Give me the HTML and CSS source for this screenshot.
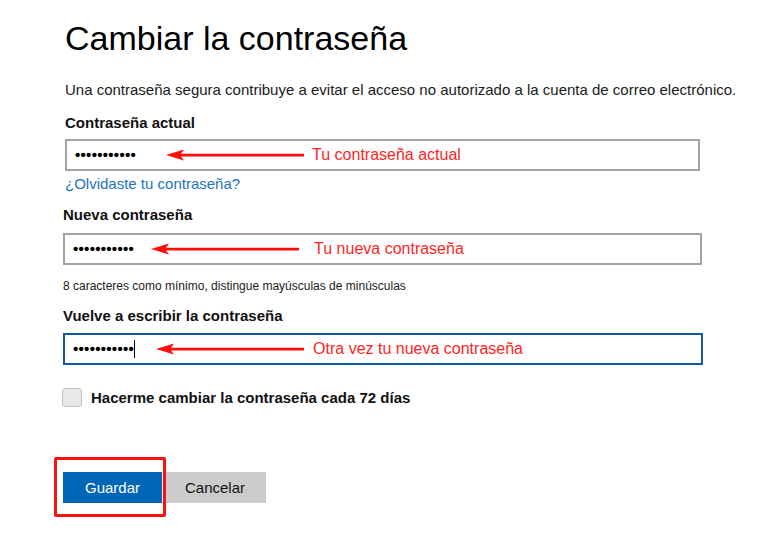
FILE: index.html
```html
<!DOCTYPE html>
<html lang="es">
<head>
<meta charset="utf-8">
<title>Cambiar la contraseña</title>
<link rel="stylesheet" href="styles.css">
</head>
<body>
<main class="page">
  <section class="top">
    <h1 class="title">Cambiar la contraseña</h1>
    <p class="intro">Una contraseña segura contribuye a evitar el acceso no autorizado a la cuenta de correo electrónico.</p>
    <label class="label label-first">Contraseña actual</label>
    <div class="field field-1">
      <span class="dots">•••••••••••</span>
      <svg class="arrow arrow-1" width="138" height="14" viewBox="0 0 138 14"><path d="M0 7 L18 1.5 L15 5.8 L138 5.8 L138 8.4 L15 8.4 L18 12.5 Z" fill="#ff0d0d"/></svg>
      <span class="note">Tu contraseña actual</span>
    </div>
    <a class="forgot" href="#">¿Olvidaste tu contraseña?</a>
  </section>
  <section class="rest">
    <label class="label label-second">Nueva contraseña</label>
    <div class="field field-2">
      <span class="dots">•••••••••••</span>
      <svg class="arrow arrow-2" width="148" height="14" viewBox="0 0 148 14"><path d="M0 7 L18 1.5 L15 5.8 L148 5.8 L148 8.4 L15 8.4 L18 12.5 Z" fill="#ff0d0d"/></svg>
      <span class="note">Tu nueva contraseña</span>
    </div>
    <p class="hint">8 caracteres como mínimo, distingue mayúsculas de minúsculas</p>
    <label class="label label-third">Vuelve a escribir la contraseña</label>
    <div class="field field-3 focused">
      <span class="dots">•••••••••••</span><span class="caret"></span>
      <svg class="arrow arrow-3" width="148" height="14" viewBox="0 0 148 14"><path d="M0 7 L18 1.5 L15 5.8 L148 5.8 L148 8.4 L15 8.4 L18 12.5 Z" fill="#ff0d0d"/></svg>
      <span class="note">Otra vez tu nueva contraseña</span>
    </div>
    <div class="check-row">
      <span class="checkbox"></span>
      <span class="check-label">Hacerme cambiar la contraseña cada 72 días</span>
    </div>
    <div class="actions">
      <span class="highlight"></span>
      <button class="btn btn-primary">Guardar</button>
      <button class="btn btn-secondary">Cancelar</button>
    </div>
  </section>
</main>
</body>
</html>
```
FILE: styles.css
```css
* { box-sizing: border-box; }
html, body { margin: 0; padding: 0; background: #fff; }
body {
  font-family: "Liberation Sans", Arial, sans-serif;
  color: #111;
  width: 768px;
  height: 535px;
  overflow: hidden;
}
.page { padding-left: 63px; padding-top: 18px; }
.top { padding-left: 2px; }
.title {
  margin: 0;
  font-size: 34px;
  font-weight: normal;
  line-height: 40px;
  color: #000;
}
.intro {
  margin: 23px 0 0;
  font-size: 15px;
  line-height: 18px;
  color: #1a1a1a;
}
.label {
  display: block;
  font-size: 15px;
  font-weight: bold;
  line-height: 18px;
  color: #111;
}
.label-first { margin-top: 15px; }
.label-second { margin-top: 13px; }
.label-third { margin-top: 14px; }
.field {
  display: flex;
  align-items: center;
  height: 32px;
  border: 2px solid #a3a3a3;
  padding-left: 8px;
  background: #fff;
}
.field-1 { width: 635px; margin-top: 7px; }
.field-2 { width: 639px; margin-top: 9px; }
.field-3 { width: 640px; margin-top: 8px; border-color: #15589a; }
.dots {
  font-size: 15px;
  font-weight: bold;
  letter-spacing: 0.3px;
  line-height: 18px;
  color: #000;
}
.caret {
  display: inline-block;
  width: 1px;
  height: 18px;
  background: #000;
}
.arrow { display: block; flex: none; }
.arrow-1 { margin-left: 30px; }
.arrow-2 { margin-left: 17px; }
.arrow-3 { margin-left: 21px; }
.note {
  font-size: 16px;
  color: #ff1f1f;
  margin-left: 8px;
  line-height: 18px;
}
.field-2 .note { margin-left: 15px; }
.field-3 .note { margin-left: 9px; }
.forgot {
  display: block;
  margin-top: 4px;
  font-size: 15px;
  line-height: 18px;
  color: #1e73c2;
  text-decoration: none;
}
.hint {
  margin: 14px 0 0;
  font-size: 12px;
  line-height: 14px;
  color: #1a1a1a;
}
.check-row {
  display: flex;
  align-items: center;
  margin-top: 23px;
}
.checkbox {
  width: 20px;
  height: 19px;
  border: 1px solid #c2c2c2;
  border-radius: 3px;
  background: #e8e8e8;
  margin-left: -1px;
}
.check-label {
  margin-left: 9px;
  font-size: 15px;
  font-weight: bold;
  color: #111;
}
.actions {
  position: relative;
  display: flex;
  gap: 2px;
  margin-top: 65px;
}
.btn {
  height: 31px;
  border: 0;
  font-family: "Liberation Sans", Arial, sans-serif;
  font-size: 15px;
  padding: 0;
}
.btn-primary { width: 99px; background: #0067b8; color: #fff; }
.btn-secondary { width: 102px; background: #cccccc; color: #111; }
.highlight {
  position: absolute;
  left: -9px;
  top: -15px;
  width: 112px;
  height: 60px;
  border: 3px solid #ff1010;
  border-radius: 2px;
  pointer-events: none;
}
```
